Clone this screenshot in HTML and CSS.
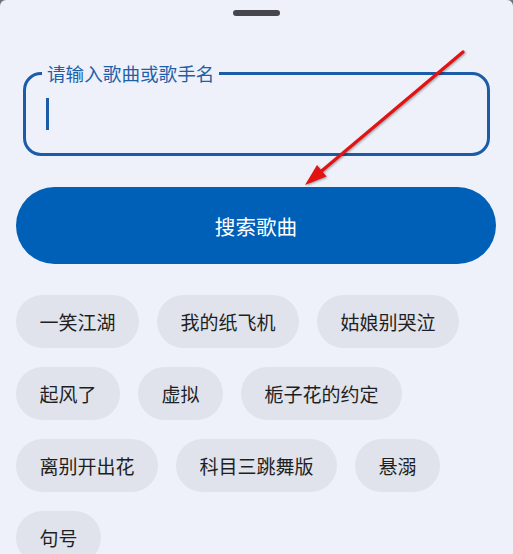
FILE: index.html
```html
<!DOCTYPE html>
<html lang="zh-CN">
<head>
<meta charset="utf-8">
<title>搜索歌曲</title>
<link rel="stylesheet" href="styles.css">
</head>
<body>
<div class="sheet">
  <div class="handle"></div>

  <fieldset class="field">
    <legend class="field-label">请输入歌曲或歌手名</legend>
    <div class="field-input"><span class="caret"></span></div>
  </fieldset>

  <button class="search-btn" type="button">搜索歌曲</button>

  <div class="chips">
    <span class="chip">一笑江湖</span>
    <span class="chip">我的纸飞机</span>
    <span class="chip">姑娘别哭泣</span>
    <span class="chip">起风了</span>
    <span class="chip">虚拟</span>
    <span class="chip">栀子花的约定</span>
    <span class="chip">离别开出花</span>
    <span class="chip">科目三跳舞版</span>
    <span class="chip">悬溺</span>
    <span class="chip">句号</span>
  </div>

  <svg class="pointer" viewBox="0 0 513 554" width="513" height="554" aria-hidden="true">
    <g class="pointer-ink">
      <line x1="463" y1="52" x2="318" y2="174" />
      <polygon points="305,185 326.5,176.5 317,165" />
    </g>
  </svg>
</div>
</body>
</html>
```

FILE: styles.css
```css
html, body {
  margin: 0;
  padding: 0;
}

body {
  background: #6f7278;
  font-family: "Noto Sans CJK SC", "Noto Sans", sans-serif;
}

.sheet {
  position: relative;
  box-sizing: border-box;
  min-height: 554px;
  padding: 10px 16px 0;
  background: #eef1fa;
  border-radius: 6px 6px 0 0;
  overflow: hidden;
}

.handle {
  width: 47px;
  height: 6px;
  margin: 0 auto;
  border-radius: 3px;
  background: #45474c;
}

.field {
  margin: 47px 7px 0 7px;
  padding: 0 16px;
  height: 93px;
  box-sizing: border-box;
  border: 3px solid #1b5ca8;
  border-radius: 18px;
}

.field-label {
  padding: 0 5px;
  font-size: 18.6px;
  line-height: 20px;
  color: #1f5fa8;
}

.field-input {
  padding-top: 15px;
}

.caret {
  display: block;
  width: 3px;
  height: 32px;
  margin-left: 4px;
  background: #1b5ca8;
}

.search-btn {
  display: block;
  width: 480px;
  height: 77px;
  margin-top: 31px;
  border: none;
  border-radius: 39px;
  background: #0060b8;
  color: #ffffff;
  font-family: inherit;
  font-size: 20.6px;
  padding: 0;
}

.chips {
  display: flex;
  flex-wrap: wrap;
  column-gap: 18px;
  row-gap: 19px;
  margin-top: 31px;
}

.chip {
  display: flex;
  align-items: center;
  height: 53px;
  padding: 0 23.5px;
  border-radius: 27px;
  background: #e0e3eb;
  color: #1e1f23;
  font-size: 19px;
  line-height: 1;
}

.pointer {
  position: absolute;
  left: 0;
  top: 0;
  pointer-events: none;
}

.pointer-ink {
  filter: drop-shadow(1px 1.5px 1px rgba(0, 0, 0, 0.35));
}

.pointer-ink line {
  stroke: #e31313;
  stroke-width: 3.2;
  stroke-linecap: round;
}

.pointer-ink polygon {
  fill: #e31313;
}
```
